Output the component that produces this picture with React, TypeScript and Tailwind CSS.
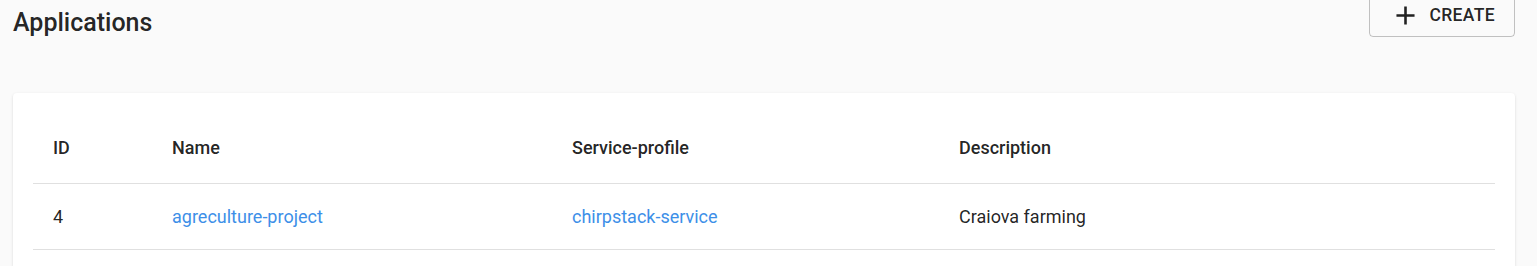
interface Application {
  id: number
  name: string
  serviceProfile: string
  description: string
}

const applications: Application[] = [
  { id: 4, name: 'agreculture-project', serviceProfile: 'chirpstack-service', description: 'Craiova farming' },
]

function AddIcon() {
  return (
    <svg viewBox="0 0 24 24" className="w-[31px] h-[31px] fill-current">
      <path d="M19 13h-6v6h-2v-6H5v-2h6V5h2v6h6v2z" />
    </svg>
  )
}

export default function App() {
  return (
    <div className="min-h-[266px] bg-[#fafafa] pl-[13px] pr-[22px] font-['Roboto',sans-serif] text-[rgba(0,0,0,0.87)]">
      {/* Header */}
      <div className="flex items-start justify-between h-[93px]">
        <h1 className="text-[25px] leading-[30px] pt-[8px] font-medium">Applications</h1>
        <button className="-mt-[7px] flex items-center h-[44px] pl-[20px] pr-[19px] border border-[rgba(0,0,0,0.23)] rounded-[4px] text-[17.5px] font-medium tracking-[0.02em]">
          <AddIcon />
          <span className="ml-[8px]">CREATE</span>
        </button>
      </div>

      {/* Tabla */}
      <div className="bg-white rounded-[4px] shadow-[0_1px_3px_rgba(0,0,0,0.12),0_1px_1px_rgba(0,0,0,0.06)] px-[20px] pt-[20px] pb-[20px]">
        <table className="w-full border-collapse text-[18px]">
          <thead>
            <tr className="h-[70px] border-b border-[#e0e0e0]">
              <th className="w-[139px] pl-[20px] text-left font-medium">ID</th>
              <th className="w-[400px] text-left font-medium">Name</th>
              <th className="w-[387px] text-left font-medium">Service-profile</th>
              <th className="text-left font-medium">Description</th>
            </tr>
          </thead>
          <tbody>
            {applications.map((app) => (
              <tr key={app.id} className="h-[66px] border-b border-[#e0e0e0]">
                <td className="pl-[20px]">{app.id}</td>
                <td className="text-[#3d8fe8]">{app.name}</td>
                <td className="text-[#3d8fe8]">{app.serviceProfile}</td>
                <td>{app.description}</td>
              </tr>
            ))}
          </tbody>
        </table>
      </div>
    </div>
  )
}
